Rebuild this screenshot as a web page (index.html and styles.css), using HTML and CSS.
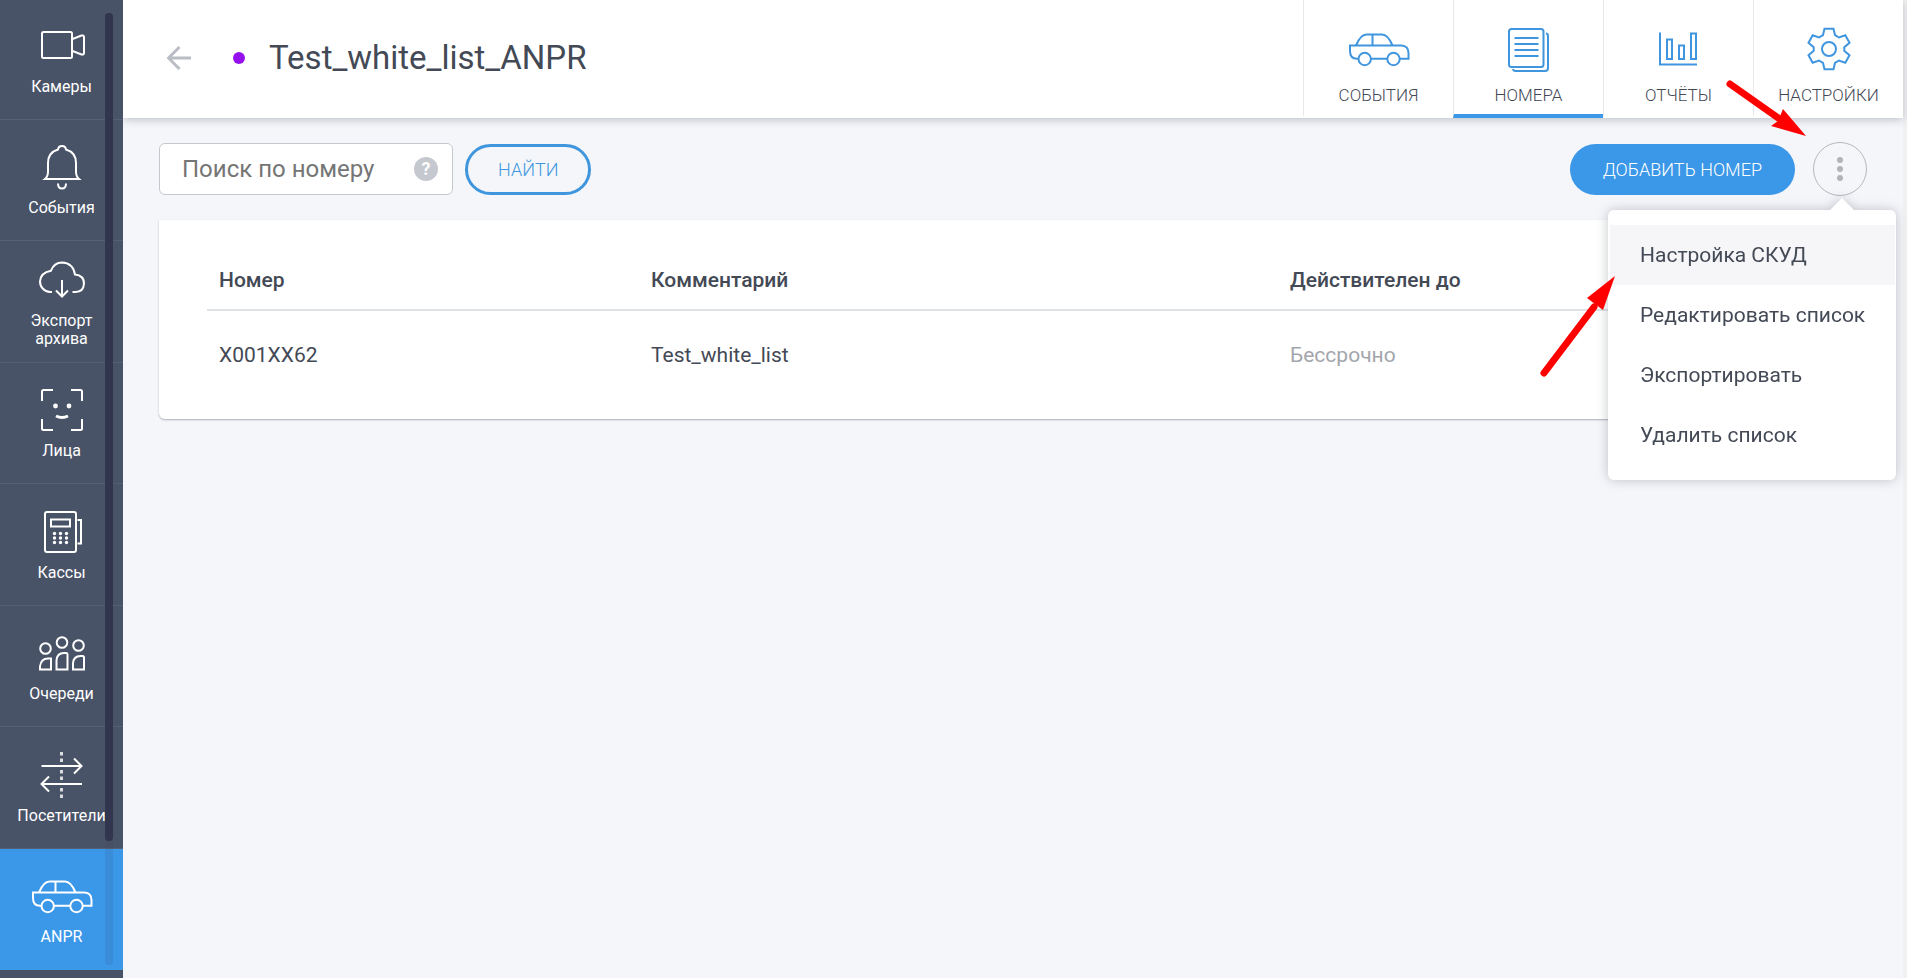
FILE: index.html
```html
<!DOCTYPE html>
<html lang="ru">
<head>
<meta charset="utf-8">
<title>Test_white_list_ANPR</title>
<link rel="stylesheet" href="styles.css">
</head>
<body>
<svg class="sprite" aria-hidden="true">
  <symbol id="car" viewBox="0 0 64 48">
    <path d="M11.500 33.700H10Q3 33.700 3 26V20.500H54.500Q61.500 21 61.500 28V33.700H53M40 33.700H24M9 20.500Q13.500 9.500 19.500 9.500H35Q41 9.500 45.500 20.500M25.500 9.500V20.500"/>
    <circle cx="17.700" cy="34" r="6.200"/><circle cx="46.500" cy="34" r="6.200"/>
  </symbol>
</svg>
<div class="app">
  <nav class="sidebar">
    <a class="side-item" href="#">
      <svg class="icon" viewBox="0 0 64 48"><rect x="12" y="10" width="30" height="26" rx="1.500"/><path d="M42.500 17L51.500 13.500Q54 13 54 15V31Q54 33 51.500 32.500L42.500 29"/></svg>
      <span>Камеры</span>
    </a>
    <a class="side-item" href="#">
      <svg class="icon" viewBox="0 0 64 48"><path d="M15 36H49Q46 33.500 46 28.500V20Q46 9.500 36 6.500Q35.500 3 32 3T28 6.500Q18 9.500 18 20V28.500Q18 33.500 15 36ZM28 40.500Q28 45.500 32 45.500T36 40.500"/></svg>
      <span>События</span>
    </a>
    <a class="side-item" href="#">
      <svg class="icon" viewBox="0 0 64 48"><path d="M22 36H20A10.500 10.500 0 0 1 10 25.500Q10.500 16.500 21 14.700Q24 6.500 32 6.500Q43 7 45 18.500Q54 19.500 54 27.500Q53.500 36 45.500 36H42.500M32 24V40.500M26 34.500L32 40.500L38 34.500"/></svg>
      <span>Экспорт<br>архива</span>
    </a>
    <a class="side-item" href="#">
      <svg class="icon" viewBox="0 0 64 48"><path d="M12 15V5.500Q12 4 13.500 4H23M41 4H50.500Q52 4 52 5.500V15M52 33V42.500Q52 44 50.500 44H41M23 44H13.500Q12 44 12 42.500V33"/><path class="thick" d="M26 30Q32 33 38 30"/><circle class="solid" cx="25.500" cy="20" r="2.400"/><circle class="solid" cx="39" cy="20" r="2.400"/></svg>
      <span>Лица</span>
    </a>
    <a class="side-item" href="#">
      <svg class="icon" viewBox="0 0 64 48"><rect x="15" y="4" width="31" height="40" rx="2"/><rect x="21" y="11.500" width="19" height="7"/><path d="M47.500 12H51V35.500H47.500"/><g class="solid"><circle cx="24.500" cy="25.500" r="1.700"/><circle cx="30.500" cy="25.500" r="1.700"/><circle cx="36.500" cy="25.500" r="1.700"/><circle cx="24.500" cy="30" r="1.700"/><circle cx="30.500" cy="30" r="1.700"/><circle cx="36.500" cy="30" r="1.700"/><circle cx="24.500" cy="34.500" r="1.700"/><circle cx="30.500" cy="34.500" r="1.700"/><circle cx="36.500" cy="34.500" r="1.700"/></g></svg>
      <span>Кассы</span>
    </a>
    <a class="side-item" href="#">
      <svg class="icon" viewBox="0 0 64 48"><circle cx="15.500" cy="19.500" r="5.300"/><circle cx="32" cy="13.500" r="5.300"/><circle cx="48.500" cy="16.500" r="5.300"/><path d="M10 40.500V37.500Q11 29.500 18 29.500H21V40.500ZM26.500 40.500V31.500Q27 24 34 24H36.500Q37.500 24 37.500 25.500V40.500ZM43 40.500V34.500Q43.500 27 50.500 27H52.500Q54 27 54 28.500V40.500Z"/></svg>
      <span>Очереди</span>
    </a>
    <a class="side-item" href="#">
      <svg class="icon" viewBox="0 0 64 48"><path d="M11.500 15H51.500M44 7.500L51.500 15L44 22.500M52 33H12M19 25.500L11.500 33L19 40.500"/><path class="dashes" d="M31.500 1V4.500M31.500 7.500V11M31.500 19V22.500M31.500 25.500V29M31.500 37V40.500M31.500 43.500V47"/></svg>
      <span>Посетители</span>
    </a>
    <a class="side-item active" href="#">
      <svg class="icon"><use href="#car"/></svg>
      <span>ANPR</span>
    </a>
    <div class="side-track"><div class="side-thumb"></div></div>
  </nav>

  <main class="main">
    <header class="header">
      <div class="heading">
        <a class="back" href="#" aria-label="Назад"><svg class="back-icon" viewBox="0 0 24 24"><path d="M24 12H2M12.500 1L1.500 12L12.500 23"/></svg></a>
        <span class="dot"></span>
        <h1 class="title">Test_white_list_ANPR</h1>
      </div>
      <nav class="tabs">
        <a class="tab" href="#"><svg class="icon"><use href="#car"/></svg><span>СОБЫТИЯ</span></a>
        <a class="tab current" href="#">
          <svg class="icon" viewBox="0 0 64 48"><rect x="12" y="4" width="34.500" height="38" rx="2.500"/><path d="M16 44Q16.500 46 18.500 46H48Q51 46 51 43V11Q51 8.500 49 8.500M17.500 13H41.500M17.500 19H41.500M17.500 25H41.500M17.500 31H41.500"/></svg><span>НОМЕРА</span></a>
        <a class="tab" href="#">
          <svg class="icon" viewBox="0 0 64 48"><path d="M13 7.500V39.500H50M20 14.500H25V34H20ZM32 20.500H37V34H32ZM44 8.500H49V34H44Z"/></svg><span>ОТЧЁТЫ</span></a>
        <a class="tab" href="#">
          <svg class="icon" viewBox="-32 -24 64 48"><circle r="7"/><path d="M-4.500 -20.300H4.500L6 -14L10 -11.500L16.300 -13.700L20.500 -6.300L15.300 -1.700V1.700L20.500 6.300L16.300 13.700L10 11.500L6 14L4.500 20.300H-4.500L-6 14L-10 11.500L-16.300 13.700L-20.500 6.300L-15.300 1.700V-1.700L-20.500 -6.300L-16.300 -13.700L-10 -11.500L-6 -14Z"/></svg><span>НАСТРОЙКИ</span></a>
      </nav>
    </header>

    <div class="toolbar">
      <div class="search">
        <input class="search-input" type="text" placeholder="Поиск по номеру" aria-label="Поиск по номеру">
        <button class="help" type="button">?</button>
      </div>
      <button class="btn outline" type="button">НАЙТИ</button>
      <button class="btn primary" type="button">ДОБАВИТЬ НОМЕР</button>
      <div class="more">
        <button class="more-btn" type="button" aria-label="Действия"><svg class="more-icon" viewBox="0 0 6 24"><circle cx="3" cy="3" r="3"/><circle cx="3" cy="12" r="3"/><circle cx="3" cy="21" r="3"/></svg></button>
        <div class="menu">
          <a class="menu-item hover" href="#">Настройка СКУД</a>
          <a class="menu-item" href="#">Редактировать список</a>
          <a class="menu-item" href="#">Экспортировать</a>
          <a class="menu-item" href="#">Удалить список</a>
        </div>
        <svg class="pointer to-button" viewBox="0 0 84 60"><path class="shaft" d="M5 5L56 41"/><path class="head" d="M81 57L46 47L53 42L58 30Z"/></svg>
        <svg class="pointer to-item" viewBox="0 0 80 106"><path class="shaft" d="M5 101L55 35"/><path class="head" d="M76 4L48 26L64 38Z"/></svg>
      </div>
    </div>

    <section class="card">
      <table class="table">
        <thead><tr><th class="col-number">Номер</th><th class="col-comment">Комментарий</th><th>Действителен до</th></tr></thead>
        <tbody><tr><td>X001XX62</td><td>Test_white_list</td><td class="muted">Бессрочно</td></tr></tbody>
      </table>
    </section>
  </main>
</div>
</body>
</html>
```
FILE: styles.css
```css
* { box-sizing: border-box; }
body {
  margin: 0;
  font-family: Roboto, "Liberation Sans", sans-serif;
  font-size: 21px;
  color: #434955;
  background: #f1f1f2;
}
a { color: inherit; text-decoration: none; }
button, input { font-family: inherit; margin: 0; }
.sprite { display: none; }
.app { display: flex; min-height: 100vh; padding-right: 4px; }
.icon {
  display: block;
  flex: none;
  width: 64px;
  height: 48px;
  fill: none;
  stroke: currentColor;
  stroke-width: 2;
}

/* Sidebar */
.sidebar {
  position: relative;
  flex: none;
  width: 123px;
  height: 100vh;
  overflow: hidden;
  background: #495367;
  color: #fff;
}
.side-item {
  display: flex;
  flex-direction: column;
  align-items: center;
  justify-content: center;
  gap: 8px;
  height: 122px;
  border-bottom: 1px solid #566074;
  font-size: 16px;
  line-height: 18px;
  text-align: center;
}
.side-item:nth-child(even) { height: 121px; }
.side-item:first-child { margin-top: -2px; }
.side-item.active { background: #3b97e8; border-color: #3b97e8; }
.solid { fill: currentColor; stroke: none; }
.thick { stroke-width: 3; }
.dashes { stroke-width: 3; opacity: 0.8; }
.side-track {
  position: absolute;
  top: 13px;
  bottom: 13px;
  right: 10px;
  width: 8px;
  border-radius: 4px;
  background: rgba(48, 52, 78, 0.1);
}
.side-thumb { height: 87%; border-radius: 4px; background: #31354e; }

/* Header */
.main { flex: 1; min-width: 0; background: #f5f6fa; }
.header {
  display: flex;
  height: 118px;
  padding-left: 44px;
  background: #fff;
  box-shadow: 0 2px 8px rgba(67, 80, 100, 0.3);
}
.heading { display: flex; align-items: center; padding-bottom: 2px; }
.back-icon { display: block; width: 24px; height: 24px; fill: none; stroke: #b9bdc4; stroke-width: 3; }
.dot { width: 12px; height: 12px; margin: 0 24px 0 42px; border-radius: 50%; background: #9410ec; }
.title { margin: 0; font-size: 33px; font-weight: 400; line-height: 40px; }
.tabs { display: flex; margin-left: auto; }
.tab {
  display: flex;
  flex-direction: column;
  align-items: center;
  gap: 12px;
  width: 150px;
  padding-top: 25px;
  border-left: 1px solid #e6e8ea;
  border-bottom: 4px solid transparent;
  font-size: 17px;
  font-weight: 300;
  line-height: 20px;
}
.tab .icon { color: #4096de; }
.tab.current { border-bottom-color: #3b97e8; }

/* Toolbar */
.toolbar { display: flex; align-items: center; gap: 12px; padding: 24px 36px 0; }
.search {
  display: flex;
  align-items: center;
  width: 294px;
  height: 52px;
  padding: 0 14px 0 22px;
  border: 1px solid #c5c8cf;
  border-radius: 6px;
  background: #fff;
}
.search-input { flex: 1; min-width: 0; padding: 0; border: 0; outline: 0; background: none; font-size: 24px; }
.search-input::placeholder { color: #757575; }
.help {
  width: 24px;
  height: 24px;
  padding: 0;
  border: 0;
  border-radius: 50%;
  background: #c5c8cf;
  color: #fff;
  font-size: 18px;
  font-weight: 700;
  line-height: 24px;
}
.btn { height: 51px; border-radius: 26px; padding: 0 30px; font-size: 18px; font-weight: 300; }
.outline { border: 3px solid #4096dd; background: transparent; color: #4096dd; }
.primary { margin: 0 6px 0 auto; padding: 0 33px; border: 0; background: #3b97e8; color: #fff; }
.more { position: relative; }
.more-btn {
  display: flex;
  align-items: center;
  justify-content: center;
  width: 54px;
  height: 54px;
  padding: 0;
  border: 1px solid #b5b8bc;
  border-radius: 50%;
  background: transparent;
}
.more-icon { width: 6px; height: 24px; fill: #b1b3b7; }
.menu {
  position: absolute;
  z-index: 2;
  top: 68px;
  right: -29px;
  width: 288px;
  padding: 15px 0;
  border-radius: 6px;
  background: #fff;
  filter: drop-shadow(0 0 6px rgba(60, 65, 80, 0.3));
}
.menu::before {
  content: "";
  position: absolute;
  top: -12px;
  right: 42px;
  border: 12px solid transparent;
  border-top: 0;
  border-bottom-color: #fff;
}
.menu-item { display: block; margin: 0 1px 0 2px; padding: 0 30px; line-height: 60px; white-space: nowrap; }
.menu-item.hover { background: #f6f6f9; }

/* Pointers drawn over the page */
.pointer { position: absolute; z-index: 3; }
.to-button { width: 84px; height: 60px; top: -63px; right: 58px; }
.to-item { width: 80px; height: 106px; top: 130px; right: 248px; }
.shaft { stroke: #fe0000; stroke-width: 7; stroke-linecap: round; }
.head { fill: #fe0000; }

/* List */
.card {
  margin: 24px 36px 0;
  padding: 30px 48px 29px;
  border-radius: 0 0 6px 6px;
  background: #fff;
  box-shadow: 0 1px 2px rgba(60, 70, 85, 0.4);
}
.table { width: 100%; table-layout: fixed; border-collapse: collapse; }
.table th, .table td { padding: 0 12px; text-align: left; }
.table th { height: 60px; border-bottom: 2px solid #dfe2e5; font-weight: 500; }
.table td { height: 80px; padding-top: 8px; }
.col-number { width: 432px; }
.col-comment { width: 639px; }
.table .muted { color: #a3a6ac; }
```
